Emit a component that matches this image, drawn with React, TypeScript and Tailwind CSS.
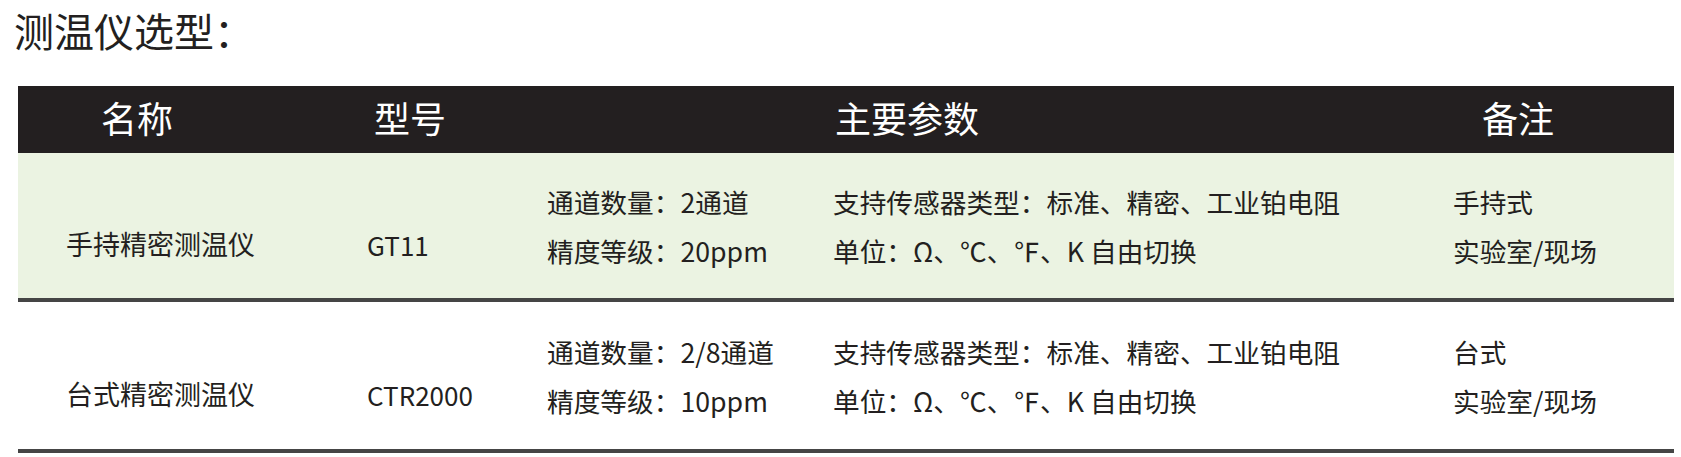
import React from "react";

interface Row {
  name: string;
  model: string;
  specs: string[];
  sensors: string[];
  notes: string[];
  bg: string;
  height: string;
}

const rows: Row[] = [
  {
    name: "手持精密测温仪",
    model: "GT11",
    specs: ["通道数量：2通道", "精度等级：20ppm"],
    sensors: ["支持传感器类型：标准、精密、工业铂电阻", "单位：Ω、℃、℉、K 自由切换"],
    notes: ["手持式", "实验室/现场"],
    bg: "bg-[#ebf3e2]",
    height: "h-[149px]",
  },
  {
    name: "台式精密测温仪",
    model: "CTR2000",
    specs: ["通道数量：2/8通道", "精度等级：10ppm"],
    sensors: ["支持传感器类型：标准、精密、工业铂电阻", "单位：Ω、℃、℉、K 自由切换"],
    notes: ["台式", "实验室/现场"],
    bg: "bg-white",
    height: "h-[151px]",
  },
];

const Lines: React.FC<{ lines: string[]; width: string }> = ({ lines, width }) => (
  <div className={`${width} flex flex-col justify-center leading-[49px]`}>
    {lines.map((l) => (
      <span key={l} className="whitespace-nowrap">
        {l}
      </span>
    ))}
  </div>
);

export default function App() {
  return (
    <div className="w-[1681px] h-[457px] bg-white text-[#231f20] font-['Noto_Sans_CJK_SC',sans-serif] overflow-hidden">
      {/* Title */}
      <div className="h-[86px] pl-[14px] pt-[10px] text-[40px] leading-[40px]">测温仪选型：</div>

      <div className="ml-[18px] w-[1656px]">
        {/* Header */}
        <div className="h-[67px] pb-[5px] bg-[#231f20] text-white text-[36px] flex items-center">
          <div className="w-[349px] pl-[83px]">名称</div>
          <div className="w-[180px] pl-[7px]">型号</div>
          <div className="w-[906px] pl-[288px]">主要参数</div>
          <div className="flex-1 pl-[29px]">备注</div>
        </div>

        {/* Body rows */}
        {rows.map((r) => (
          <div
            key={r.model}
            className={`${r.height} ${r.bg} border-b-[4px] border-[#454545] flex text-[26.7px]`}
          >
            <div className="w-[349px] pl-[48px] pt-[38px] flex items-center text-[27px]">{r.name}</div>
            <div className="w-[180px] pt-[38px] flex items-center text-[26px]">{r.model}</div>
            <Lines lines={r.specs} width="w-[286px]" />
            <Lines lines={r.sensors} width="w-[620px]" />
            <Lines lines={r.notes} width="flex-1" />
          </div>
        ))}
      </div>
    </div>
  );
}
